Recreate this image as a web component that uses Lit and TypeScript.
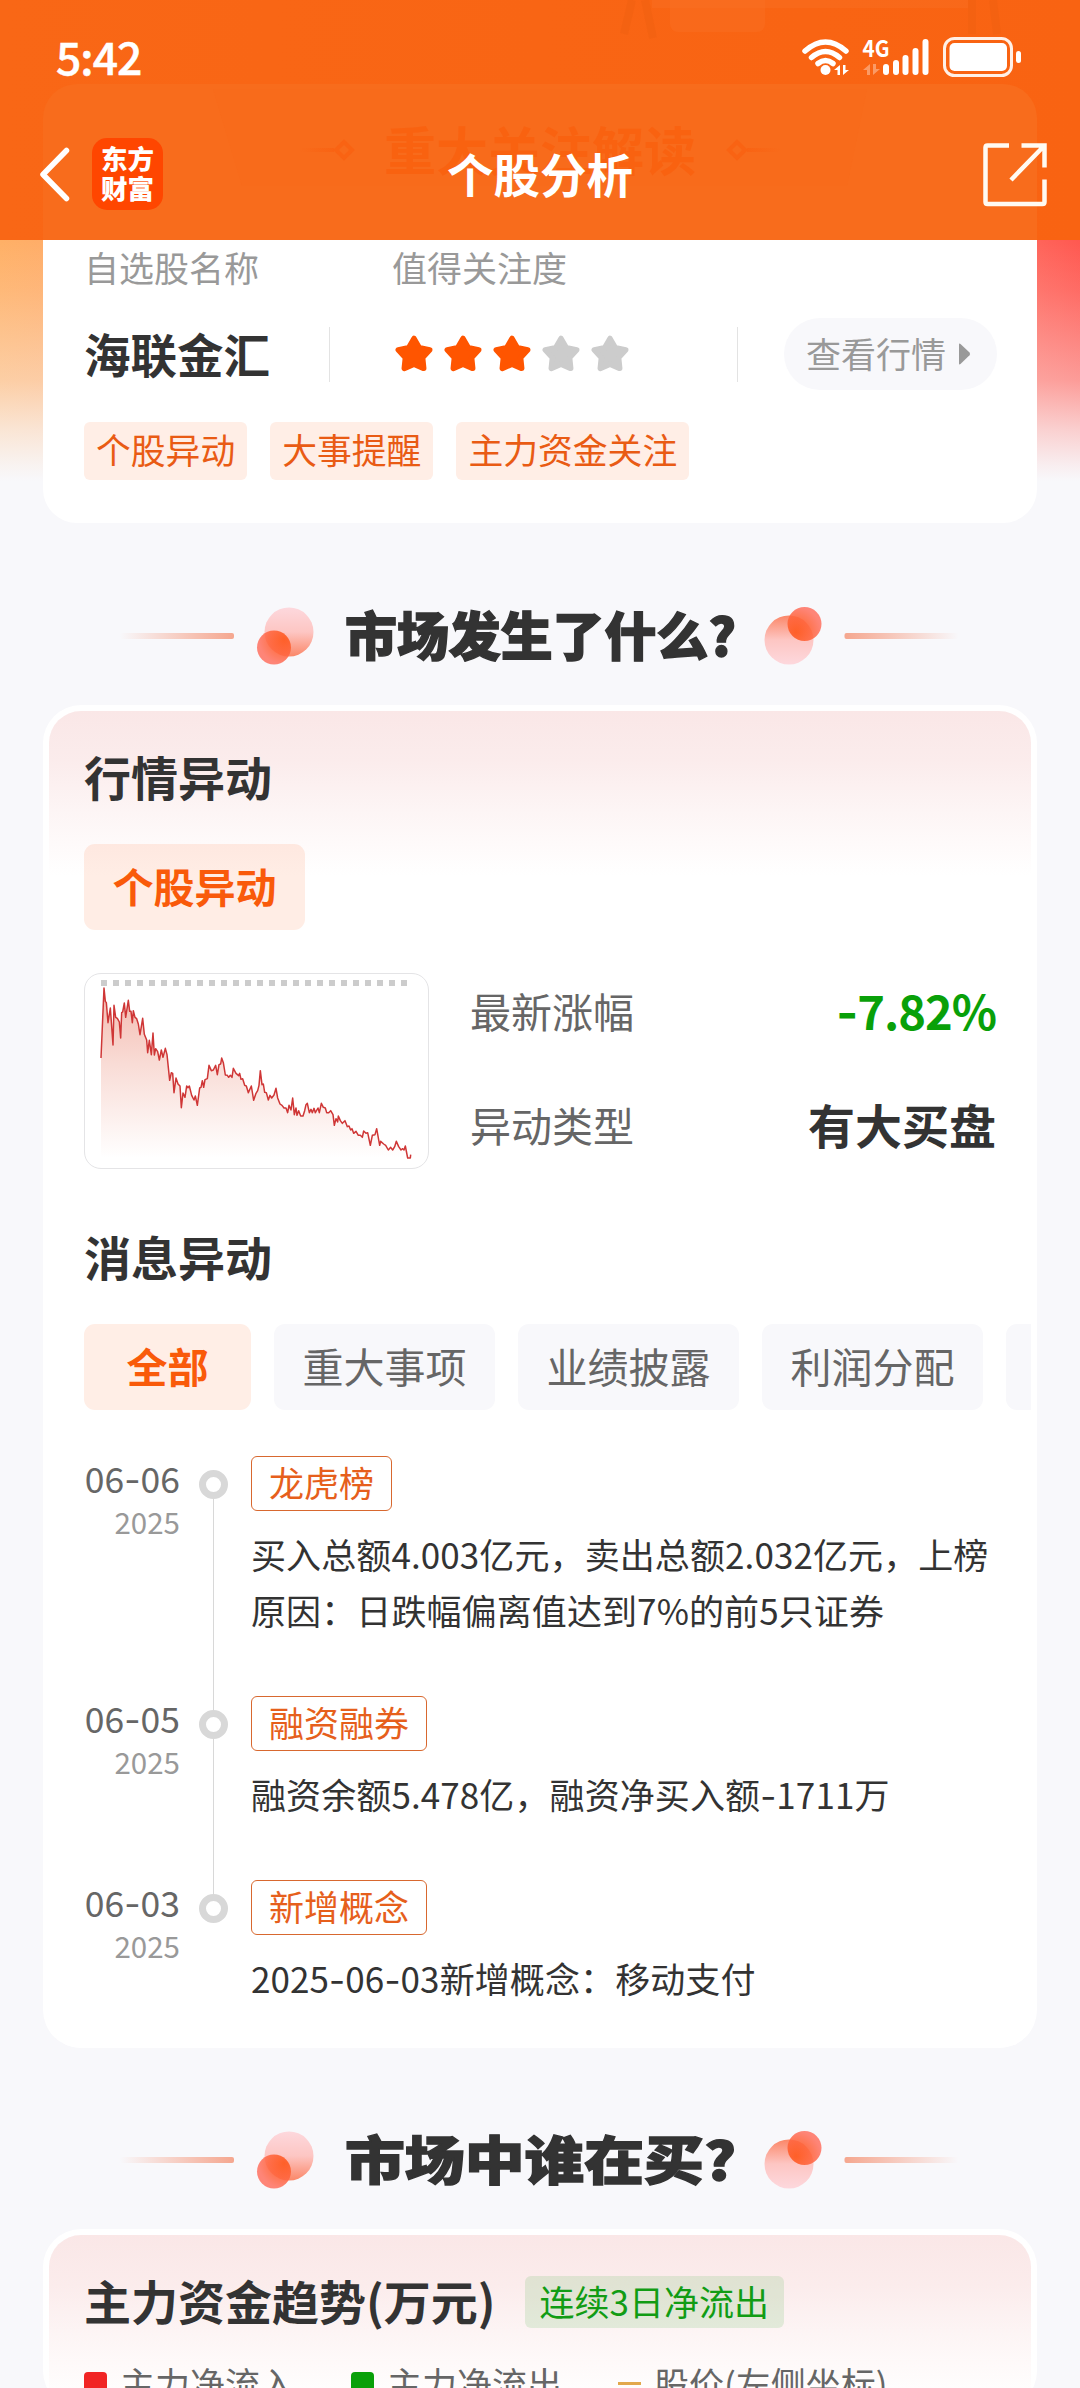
import { LitElement, html, css, svg } from "lit";
import { customElement, property } from "lit/decorators.js";
import { classMap } from "lit/directives/class-map.js";

const STAR =
  "M20 4.500L25.200 13.700 35.700 15.900 28.600 23.700 29.700 34.350 20 30.200 10.300 34.350 11.400 23.700 4.300 15.900 14.800 13.700z";

const TREND: [number, number][] = [
  [183, 1074], [192, 864], [196, 904], [199, 908], [204, 968], [211, 924], [219, 1035], [222, 916], [227, 952],
  [232, 955], [238, 966], [242, 1014], [245, 938], [248, 936], [253, 909], [257, 952], [265, 901], [269, 934],
  [273, 934], [277, 968], [280, 932], [285, 952], [290, 956], [295, 972], [300, 1004], [308, 955], [313, 1003],
  [320, 1020], [323, 1058], [328, 1021], [334, 1064], [339, 999], [343, 1065], [347, 1046], [353, 1055], [358, 1080],
  [364, 1050], [369, 1072], [376, 1045], [381, 1064], [389, 1141], [394, 1118], [398, 1120], [402, 1178], [408, 1134],
  [414, 1152], [420, 1158], [424, 1223], [429, 1179], [435, 1192], [440, 1158], [444, 1163], [448, 1158], [455, 1186],
  [462, 1200], [466, 1188], [472, 1216], [479, 1164], [483, 1162], [487, 1142], [491, 1162], [495, 1139], [502, 1136],
  [507, 1096], [514, 1112], [520, 1110], [527, 1096], [532, 1124], [537, 1094], [542, 1092], [545, 1074], [550, 1088],
  [556, 1125], [562, 1126], [566, 1132], [571, 1126], [576, 1132], [580, 1105], [588, 1120], [596, 1127], [599, 1120],
  [603, 1138], [608, 1136], [614, 1156], [619, 1158], [625, 1178], [634, 1158], [641, 1201], [648, 1180], [653, 1172],
  [657, 1156], [661, 1112], [666, 1154], [670, 1152], [674, 1177], [679, 1178], [685, 1200], [690, 1186], [695, 1194],
  [702, 1185], [708, 1165], [713, 1194], [720, 1212], [726, 1216], [732, 1224], [738, 1224], [743, 1238], [747, 1216],
  [753, 1230], [758, 1194], [763, 1244], [768, 1224], [771, 1246], [776, 1232], [782, 1248], [789, 1248], [794, 1232],
  [798, 1214], [802, 1210], [808, 1238], [813, 1228], [817, 1238], [822, 1225], [826, 1238], [834, 1224], [838, 1238],
  [844, 1210], [850, 1222], [856, 1224], [860, 1238], [866, 1238], [872, 1232], [879, 1244], [883, 1276], [888, 1256],
  [893, 1266], [895, 1248], [901, 1262], [907, 1270], [915, 1262], [922, 1280], [927, 1278], [932, 1290], [936, 1286],
  [941, 1300], [948, 1294], [955, 1306], [961, 1306], [967, 1312], [971, 1293], [978, 1300], [983, 1298], [991, 1336],
  [997, 1306], [1005, 1304], [1010, 1286], [1019, 1336], [1022, 1324], [1031, 1332], [1037, 1336], [1045, 1350],
  [1052, 1342], [1058, 1350], [1064, 1340], [1069, 1324], [1076, 1340], [1083, 1350], [1088, 1346], [1092, 1350],
  [1096, 1338], [1103, 1374], [1111, 1374], [1112, 1364],
];

// Hyphens are set in a face with a wider dash than the CJK family has.
const dashed = (s: string) =>
  s.split("-").map((part, i) => (i ? html`<span class="hy">-</span>${part}` : part));

@customElement("section-title")
export class SectionTitle extends LitElement {
  @property() text = "";

  static styles = css`
    :host { display: block; height: 181px; box-sizing: border-box; padding-top: 82px; }
    .art { display: block; margin: 0 auto; width: 840px; height: 60px; overflow: visible; }
    .t {
      font: 900 52px "Noto Sans CJK SC", "Noto Sans", sans-serif;
      fill: #333; stroke: #333; stroke-width: 1.4px;
    }
  `;

  render() {
    return html`<svg class="art" viewBox="120 0 840 60">
      <defs>
        <linearGradient id="l"><stop offset="0" stop-color="#f5a188" stop-opacity="0"/><stop offset="1" stop-color="#f5a78f"/></linearGradient>
        <linearGradient id="r"><stop offset="0" stop-color="#f5a78f"/><stop offset="1" stop-color="#f5a188" stop-opacity="0"/></linearGradient>
        <linearGradient id="b" x2="0" y2="1"><stop offset="0" stop-color="#fdd8dd"/><stop offset=".5" stop-color="#fdc6c3"/><stop offset="1" stop-color="#fb8768"/></linearGradient>
        <linearGradient id="u" x2="0" y2="1"><stop offset="0" stop-color="#fb8768"/><stop offset=".5" stop-color="#fdc6c3"/><stop offset="1" stop-color="#fdd8dd"/></linearGradient>
        <radialGradient id="o1" cx=".8" cy=".25" r=".75"><stop offset="0" stop-color="#ff5417"/><stop offset=".6" stop-color="#ff643c"/><stop offset="1" stop-color="#ff7565"/></radialGradient>
        <radialGradient id="o2" cx=".25" cy=".75" r=".75"><stop offset="0" stop-color="#ff5417"/><stop offset=".6" stop-color="#ff643c"/><stop offset="1" stop-color="#ff7565"/></radialGradient>
      </defs>
      <rect x="120" y="27" width="114" height="6" rx="2" fill="url(#l)"/>
      <circle cx="289" cy="26" r="24.500" fill="url(#b)"/>
      <circle cx="274" cy="41.500" r="17" fill="url(#o1)" fill-opacity=".88"/>
      <text class="t" x="345" y="49.500" textLength="391" lengthAdjust="spacingAndGlyphs">${this.text}</text>
      <circle cx="789" cy="34" r="24.500" fill="url(#u)"/>
      <circle cx="804.500" cy="18" r="17" fill="url(#o2)" fill-opacity=".88"/>
      <rect x="844.500" y="27" width="114" height="6" rx="2" fill="url(#r)"/>
    </svg>`;
  }
}

@customElement("app-header")
export class AppHeader extends LitElement {
  static styles = css`
    :host {
      display: flex; flex-direction: column; position: relative; height: 240px; box-sizing: border-box;
      background: linear-gradient(90deg, #f96716, #f96312); color: #fff; overflow: hidden;
    }
    svg { display: block; }
    .ghost { position: absolute; left: 0; top: 0; width: 1080px; height: 240px; }
    .ghost-t { font: 700 52px "Noto Sans CJK SC", sans-serif; fill: #f95f0e; fill-opacity: .75; }
    .status {
      position: relative; display: flex; justify-content: space-between; height: 84px; padding: 0 54px 0 56px;
      box-sizing: border-box;
    }
    .time { font-size: 44.500px; font-weight: 500; line-height: 111px; letter-spacing: -1px; -webkit-text-stroke: .5px #fff; }
    .sys { width: 230px; height: 84px; }
    .g4 { font: 700 23px "Noto Sans CJK SC", sans-serif; fill: #fff; }
    .bar { position: relative; display: grid; grid-template-columns: 1fr auto 1fr; align-items: center; height: 96px; padding: 42px 36px 0; }
    .left { display: flex; align-items: center; gap: 21px; margin-left: 3px; }
    .logo {
      display: flex; flex-direction: column; align-items: center; justify-content: center; width: 71px; height: 72px;
      border-radius: 15px; background: #ff4600; font-size: 26.500px; font-weight: 900; line-height: 30px;
      box-sizing: border-box; padding-bottom: 2px;
    }
    .title { font-size: 46.500px; font-weight: 700; line-height: 60px; margin-top: -2px; }
    .share { justify-self: end; margin: 1px -3px 0 0; }
  `;

  render() {
    const bars = [[886, 64], [896, 60], [905.5, 55], [915.5, 48], [925.5, 39]];
    return html`
      <svg class="ghost" viewBox="0 0 1080 240">
        <defs>
          <linearGradient id="gl"><stop offset="0" stop-color="#f96010" stop-opacity="0"/><stop offset="1" stop-color="#f96010" stop-opacity=".7"/></linearGradient>
          <linearGradient id="gr"><stop offset="0" stop-color="#f96010" stop-opacity=".7"/><stop offset="1" stop-color="#f96010" stop-opacity="0"/></linearGradient>
        </defs>
        <g fill="#fa7427" fill-opacity=".35">
          <rect x="652" y="0" width="316" height="8"/>
          <rect x="670" y="-20" width="95" height="52" rx="8"/>
        </g>
        <g stroke="#ea5f10" stroke-opacity=".28" stroke-width="8" fill="none">
          <path d="M632 0l-8 34M645 0l8 38M972 0v34M993 0l4 34"/>
        </g>
        <path d="M43 240V118a34 34 0 0 1 34-34h926a34 34 0 0 1 34 34v122z" fill="#f86c1c"/>
        <path d="M213 89h654l-20 97H242z" fill="#f96817" fill-opacity=".2"/>
        <text class="ghost-t" x="384" y="171">重大关注解读</text>
        <path d="M344 142l8 8-8 8-8-8zM737 142l8 8-8 8-8-8z" fill="none" stroke="#f96010" stroke-width="4" stroke-opacity=".7"/>
        <rect x="300" y="148" width="34" height="4" fill="url(#gl)"/>
        <rect x="747" y="148" width="34" height="4" fill="url(#gr)"/>
      </svg>
      <div class="status">
        <span class="time">5:42</span>
        <svg class="sys" viewBox="796 0 230 84">
          <g fill="none" stroke="#fff" stroke-width="5.500" stroke-linecap="round">
            <path d="M805 51Q825.500 33 846 51M811.500 57.500Q825.500 45.500 839.500 57.500M818 63.500Q825.500 57.500 833 63.500"/>
          </g>
          <circle cx="825.500" cy="70" r="5" fill="#fff"/>
          <path d="M834 70l6-5v10h-2.500v-5zM849 70l-6 5V65h2.500v5z" fill="#fff"/>
          <text class="g4" x="862.500" y="57" textLength="27" lengthAdjust="spacingAndGlyphs">4G</text>
          <path d="M863 70l7-6v11h-3v-5zM880 69l-7 6V64h3v5z" fill="#fff" fill-opacity=".35"/>
          ${bars.map(([x, y]) => svg`<rect x=${x - 3} y=${y} width="6" height=${75 - y} rx="3" fill="#fff"/>`)}
          <rect x="944.500" y="38.500" width="67" height="37" rx="10" fill="none" stroke="#fff" stroke-opacity=".9" stroke-width="3"/>
          <rect x="949.500" y="43" width="57.500" height="28" rx="5" fill="#fff"/>
          <rect x="1016" y="51" width="5" height="12" rx="2.500" fill="#fff"/>
        </svg>
      </div>
      <div class="bar">
        <div class="left">
          <svg width="32" height="56" viewBox="0 0 32 56"><path d="M27.500 4.500L4 28.500 27.500 52.500" fill="none" stroke="#fff" stroke-width="5.500" stroke-linecap="round" stroke-linejoin="round"/></svg>
          <div class="logo"><span>东方</span><span>财富</span></div>
        </div>
        <div class="title">个股分析</div>
        <svg class="share" width="64" height="64" viewBox="0 0 64 64">
          <path d="M26 2.500H4.500Q2.500 2.500 2.500 4.500V59Q2.500 61 4.500 61H59.500Q61.500 61 61.500 59V36.500M38.500 2.500H61.500V24.500M61 3L28 37" fill="none" stroke="#fffaf2" stroke-width="4.500"/>
        </svg>
      </div>
    `;
  }
}

@customElement("app-root")
export class AppRoot extends LitElement {
  static styles = css`
    :host {
      display: block; width: 1080px; height: 2388px; overflow: hidden; background: #f8f8fb; color: #333;
      font-family: "Noto Sans CJK SC", "Noto Sans", sans-serif; font-size: 35px;
    }
    svg { display: block; }
    .hy { font-family: Inter, "Noto Sans", sans-serif; line-height: 0; }
    .hero {
      padding: 0 43px; margin-bottom: 1px;
      background:
        linear-gradient(180deg, rgba(248,248,251,0) 0, rgba(248,248,251,.12) 50px, rgba(248,248,251,.42) 140px, rgba(248,248,251,.74) 190px, rgba(248,248,251,.93) 225px, #f8f8fb 241px),
        linear-gradient(90deg, #ffb066 0, #ffad68 43px, #ff645a 1037px, #ff5850 1080px);
    }
    .stock { background: #fff; border-radius: 0 0 34px 34px; padding: 9px 40px 0 41px; height: 283px; box-sizing: border-box; }
    .labels { display: flex; height: 36px; line-height: 36px; color: #999; }
    .labels .a { width: 308px; }
    .row { display: flex; align-items: center; height: 72px; margin-top: 33px; }
    .name { width: 245px; font-size: 46.500px; font-weight: 700; line-height: 69px; height: 72px; }
    .rule { width: 1px; height: 55px; background: #e3e3e3; }
    .stars { display: flex; gap: 9px; width: 343px; margin-left: 64px; }
    .star { fill: #ccc; stroke: #ccc; stroke-width: 5.500px; stroke-linejoin: round; }
    .star.on { fill: #ff5500; stroke: #ff5500; }
    .go {
      display: flex; align-items: center; gap: 12px; margin-left: 46px; width: 213px; height: 72px; border-radius: 36px;
      background: #f8f8fb; color: #999; box-sizing: border-box; padding-left: 22px; white-space: nowrap;
    }
    .go span { line-height: 72px; height: 75px; }
    .chips { display: flex; gap: 23px; margin-top: 32px; }
    .chip { height: 58px; line-height: 54px; padding: 0 12px; border-radius: 6px; background: #ffeee6; color: #e95b14; font-size: 34.800px; }

    .panel { margin: 0 43px; padding: 6px; border-radius: 38px; background: #fff; overflow: hidden; box-sizing: border-box; }
    .inner {
      border-radius: 32px 32px 0 0; padding: 35px 0 0 35px; box-sizing: border-box;
      background: linear-gradient(180deg, #fae7e7 0, #fbecec 50px, #fdf5f5 100px, #fff 165px);
    }
    .main { height: 1343px; padding-bottom: 0; }
    .h { font-size: 47px; font-weight: 700; line-height: 60px; }
    .tabs { display: flex; gap: 23px; margin-top: 38px; overflow: hidden; }
    .tab {
      flex: none; height: 86px; line-height: 83px; width: 221px; text-align: center; border-radius: 11px; font-size: 41px;
      background: #f8f8fb; color: #666;
    }
    .tab.on { background: #ffeee6; color: #f95a0a; font-weight: 700; }
    .tab.solo { background: rgba(255, 86, 10, .105); }
    .tab.short { width: 167px; }
    .quote { display: flex; margin: 43px 35px 0 0; }
    .chart { width: 345px; height: 196px; border: 1px solid #e4e4e6; border-radius: 17px; box-sizing: border-box; }
    .facts { flex: 1; display: flex; flex-direction: column; gap: 54px; margin-left: 41px; padding-top: 7px; }
    .fact { display: flex; justify-content: space-between; height: 60px; line-height: 60px; font-size: 41px; color: #666; }
    .val { font-size: 47px; font-weight: 700; color: #333; }
    .down { color: #09a009; letter-spacing: -1px; }
    .news { margin-top: 57px; }
    .list { margin-top: 46px; }
    .item { display: grid; grid-template-columns: 96px 71px 1fr; padding-right: 30px; }
    .item .body { padding-bottom: 56px; }
    .date { text-align: right; color: #666; font-size: 35.500px; line-height: 44px; white-space: nowrap; }
    .year { color: #999; font-size: 29.500px; line-height: 42px; }
    .axis { display: flex; flex-direction: column; align-items: center; margin-right: 4px; }
    .lead { width: 1px; height: 14px; background: #d8d8d8; flex: none; }
    .lead.none { background: none; }
    .dot { width: 29px; height: 29px; box-sizing: border-box; border: 7px solid #d8d8d8; border-radius: 50%; flex: none; }
    .line { width: 1px; flex: 1; background: #d8d8d8; }
    .tag {
      display: inline-block; height: 55px; line-height: 50px; box-sizing: border-box; padding: 0 17px; vertical-align: top;
      border: 1.500px solid #d8682f; border-radius: 6px; color: #e65f1c;
    }
    .text { margin: 15px 0 2px; line-height: 56px; letter-spacing: .1px; }

    .flow { padding: 6px 6px 0; height: 180px; }
    .flow .inner { height: 174px; }
    .head { display: flex; align-items: center; gap: 29px; height: 60px; }
    .badge { height: 52px; line-height: 49px; margin-top: 4px; padding: 0 15px; border-radius: 6px; background: rgba(0, 150, 0, .105); color: #119c14; white-space: nowrap; }
    .legend { display: flex; gap: 56px; margin-top: 31px; color: #666; line-height: 42px; white-space: nowrap; }
    .key { display: flex; align-items: center; gap: 13px; height: 44px; }
    .sw { width: 23px; height: 23px; border-radius: 4px; }
    .red { background: #f12424; }
    .green { background: #09a009; }
    .amber { height: 3px; border-radius: 0; background: #e2a84c; }
  `;

  private tabs = ["全部", "重大事项", "业绩披露", "利润分配", ""];
  private items = [
    { d: "06-06", tag: "龙虎榜", t: "买入总额4.003亿元，卖出总额2.032亿元，上榜原因：日跌幅偏离值达到7%的前5只证券" },
    { d: "06-05", tag: "融资融券", t: "融资余额5.478亿，融资净买入额-1711万" },
    { d: "06-03", tag: "新增概念", t: "2025-06-03新增概念：移动支付" },
  ];

  private chart() {
    const pts = TREND.map((p) => p.join(",")).join(" ");
    return html`<div class="chart">
      <svg width="343" height="194" viewBox="135 822 1029 582">
        <defs><linearGradient id="f" gradientUnits="userSpaceOnUse" x1="0" y1="864" x2="0" y2="1374">
          <stop offset="0" stop-color="#f3b9ae"/><stop offset=".45" stop-color="#f9dcd6"/><stop offset="1" stop-color="#fff"/>
        </linearGradient></defs>
        <path d="M183 849H1110" stroke="#ccc" stroke-width="18" stroke-dasharray="18 18"/>
        <polygon points="183,1374 ${pts} 1112,1374" fill="url(#f)"/>
        <polyline points=${pts} fill="none" stroke="#cf3636" stroke-width="4.500" stroke-linejoin="round"/>
      </svg>
    </div>`;
  }

  render() {
    return html`
      <app-header></app-header>
      <div class="hero">
        <div class="stock">
          <div class="labels"><span class="a">自选股名称</span><span>值得关注度</span></div>
          <div class="row">
            <div class="name">海联金汇</div>
            <i class="rule"></i>
            <div class="stars">
              ${[1, 1, 1, 0, 0].map((on) => html`<svg width="40" height="40" viewBox="0 0 40 40"><path class=${classMap({ star: true, on: !!on })} d=${STAR}/></svg>`)}
            </div>
            <i class="rule"></i>
            <div class="go"><span>查看行情</span><svg width="13" height="22" viewBox="0 0 13 22"><path d="M1 1.500Q1 0 2.500 1L11.500 9.500Q12.700 11 11.500 12.300L2.500 21Q1 22 1 20.500z" fill="#999"/></svg></div>
          </div>
          <div class="chips">${["个股异动", "大事提醒", "主力资金关注"].map((c) => html`<span class="chip">${c}</span>`)}</div>
        </div>
      </div>

      <section-title text="市场发生了什么?"></section-title>

      <div class="panel main">
        <div class="inner">
          <div class="h">行情异动</div>
          <div class="tabs"><div class="tab on solo">个股异动</div></div>
          <div class="quote">
            ${this.chart()}
            <div class="facts">
              <div class="fact"><span>最新涨幅</span><span class="val down">${dashed("-7.82%")}</span></div>
              <div class="fact"><span>异动类型</span><span class="val">有大买盘</span></div>
            </div>
          </div>
          <div class="h news">消息异动</div>
          <div class="tabs">
            ${this.tabs.map((t, i) => html`<div class=${classMap({ tab: true, on: i === 0, short: i === 0 })}>${t}</div>`)}
          </div>
          <div class="list">
            ${this.items.map((n, i) => html`<div class="item">
              <div class="date">${dashed(n.d)}<div class="year">2025</div></div>
              <div class="axis">
                <i class=${classMap({ lead: true, none: i === 0 })}></i><i class="dot"></i>
                ${i < this.items.length - 1 ? html`<i class="line"></i>` : null}
              </div>
              <div class="body"><span class="tag">${n.tag}</span><div class="text">${dashed(n.t)}</div></div>
            </div>`)}
          </div>
        </div>
      </div>

      <section-title text="市场中谁在买?"></section-title>

      <div class="panel flow">
        <div class="inner">
          <div class="head"><span class="h">主力资金趋势(万元)</span><span class="badge">连续3日净流出</span></div>
          <div class="legend">
            <span class="key"><i class="sw red"></i>主力净流入</span>
            <span class="key"><i class="sw green"></i>主力净流出</span>
            <span class="key"><i class="sw amber"></i>股价(左侧坐标)</span>
          </div>
        </div>
      </div>
    `;
  }
}
